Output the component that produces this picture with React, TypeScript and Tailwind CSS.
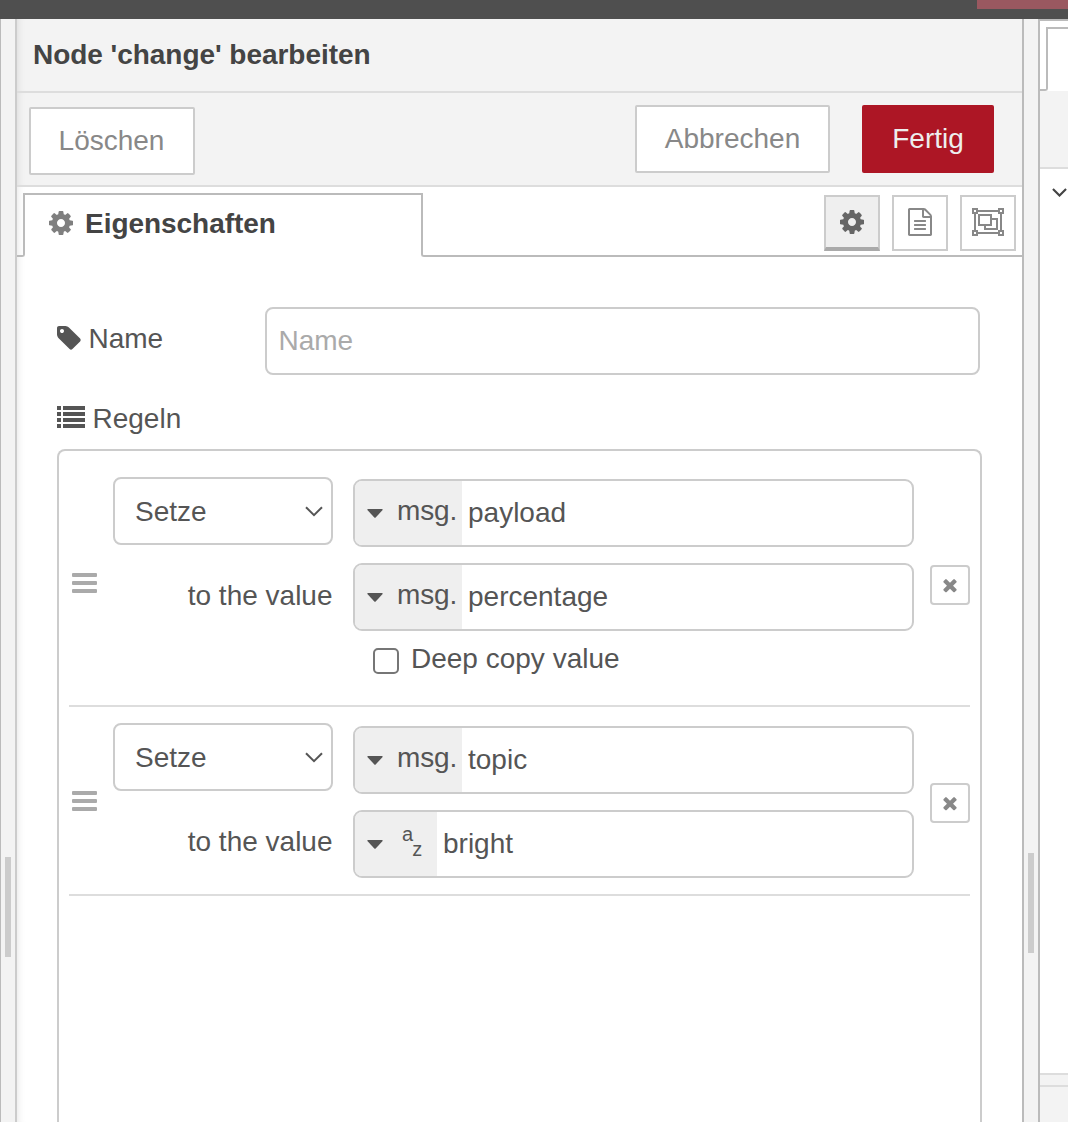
import type { ReactNode } from "react";

const COG =
  "M1152 896q0-106-75-181t-181-75-181 75-75 181 75 181 181 75 181-75 75-181zm512-109v222q0 12-8 23t-20 13l-185 28q-19 54-39 91 35 50 107 138 10 12 10 25t-9 23q-27 37-99 108t-94 71q-12 0-26-9l-138-108q-44 23-91 38-16 136-29 186-7 28-36 28h-222q-14 0-24.5-8.5t-11.5-21.5l-28-184q-49-16-90-37l-141 107q-10 9-25 9-14 0-25-11-126-114-165-168-7-10-7-23 0-12 8-23 15-21 51-66.5t54-70.5q-27-50-41-99l-183-27q-13-2-21-12.5t-8-23.5v-222q0-12 8-23t19-13l186-28q14-46 39-92-40-57-107-138-10-12-10-24 0-10 9-23 26-36 98.5-107.5t94.5-71.5q13 0 26 10l138 107q44-23 91-38 16-136 29-186 7-28 36-28h222q14 0 24.5 8.5t11.5 21.5l28 184q49 16 90 37l142-107q9-9 24-9 13 0 25 10 129 119 165 170 7 8 7 22 0 12-8 23-15 21-51 66.5t-54 70.5q26 50 41 98l183 28q13 2 21 12.5t8 23.5z";
const FILE_TEXT =
  "M1596 380q28 28 48 76t20 88v1152q0 40-28 68t-68 28h-1344q-40 0-68-28t-28-68v-1600q0-40 28-68t68-28h896q40 0 88 20t76 48zm-444-244v376h376q-10-29-22-41l-313-313q-12-12-41-22zm384 1528v-1024h-416q-40 0-68-28t-28-68v-416h-768v1536h1280zm-1024-864q0-14 9-23t23-9h704q14 0 23 9t9 23v64q0 14-9 23t-23 9h-704q-14 0-23-9t-9-23v-64zm736 224q14 0 23 9t9 23v64q0 14-9 23t-23 9h-704q-14 0-23-9t-9-23v-64q0-14 9-23t23-9h704zm0 256q14 0 23 9t9 23v64q0 14-9 23t-23 9h-704q-14 0-23-9t-9-23v-64q0-14 9-23t23-9h704z";
const TAG =
  "M576 448q0-53-37.5-90.5t-90.5-37.5-90.5 37.5-37.5 90.5 37.5 90.5 90.5 37.5 90.5-37.5 37.5-90.5zm1067 576q0 53-37 90l-491 492q-39 37-91 37-53 0-90-37l-715-716q-38-37-64.5-101t-26.5-117v-416q0-52 38-90t90-38h416q53 0 117 26.5t102 64.5l715 714q37 39 37 91z";
const TIMES =
  "M1490 1322q0 40-28 68l-136 136q-28 28-68 28t-68-28l-294-294-294 294q-28 28-68 28t-68-28l-136-136q-28-28-28-68t28-68l294-294-294-294q-28-28-28-68t28-68l136-136q28-28 68-28t68 28l294 294 294-294q28-28 68-28t68 28l136 136q28 28 28 68t-28 68l-294 294 294 294q28 28 28 68z";

function Icon({ d, className }: { d: string; className: string }) {
  return (
    <svg viewBox="0 0 1792 1792" fill="currentColor" className={`shrink-0 ${className}`}>
      <path d={d} />
    </svg>
  );
}

function ListIcon() {
  return (
    <svg viewBox="0 0 28 22" fill="currentColor" className="h-[22px] w-7 shrink-0">
      {[0, 6, 12, 18].map((y) => (
        <g key={y}>
          <rect x="0" y={y} width="4" height="4" />
          <rect x="6" y={y} width="22" height="4" />
        </g>
      ))}
    </svg>
  );
}

function ObjectGroupIcon() {
  return (
    <svg viewBox="0 0 32 28" fill="none" stroke="currentColor" strokeWidth="2" className="h-7 w-8">
      <path d="M6 3h20M6 25h20M3 6v16M29 6v16" />
      <path d="M1 1h4v4h-4zM27 1h4v4h-4zM1 23h4v4h-4zM27 23h4v4h-4z" />
      <path d="M7 7h12v10h-12zM19 11h6v10h-12v-4" />
    </svg>
  );
}

function Chevron({ className }: { className: string }) {
  return (
    <svg viewBox="0 0 18 11" fill="none" stroke="currentColor" className={className}>
      <path d="M1 1.2L9 9.2L17 1.2" />
    </svg>
  );
}

function DragHandle() {
  return (
    <div className="flex w-[25px] flex-col gap-1">
      <div className="h-1 rounded-[1px] bg-[#aaa]" />
      <div className="h-1 rounded-[1px] bg-[#aaa]" />
      <div className="h-1 rounded-[1px] bg-[#aaa]" />
    </div>
  );
}

function TypedInput({ type, value }: { type: "msg" | "str"; value: string }) {
  return (
    <div className="flex h-[68px] w-[561px] overflow-hidden rounded-[9px] border-2 border-[#ccc] bg-white">
      <div
        className={`flex shrink-0 items-center bg-[#efefef] pl-3 ${type === "msg" ? "w-[107px]" : "w-[82px]"}`}
      >
        <svg viewBox="0 0 16 9" fill="currentColor" className="h-[9px] w-4 shrink-0">
          <path d="M1 0h14q1 0 .6 .9L8.7 8.4q-.7 .6-1.4 0L.4 .9Q0 0 1 0z" />
        </svg>
        {type === "msg" ? (
          <span className="-mt-1 ml-3.5 tracking-[-0.1px]">msg.</span>
        ) : (
          <span className="ml-[19px] flex h-16 items-start text-[20px] leading-[20px]">
            <span className="mt-3">a</span>
            <span className="-ml-px mt-[27px]">z</span>
          </span>
        )}
      </div>
      <span className="pl-1.5 leading-[63px]">{value}</span>
    </div>
  );
}

function Rule({ className, children }: { className: string; children: ReactNode }) {
  return (
    <li className={`flex border-b-2 border-[#ddd] ${className}`}>
      <div className="flex w-[44px] items-center pb-4 pl-[3px]">
        <DragHandle />
      </div>
      <div className="w-[220px]">
        <div className="flex h-[68px] items-center justify-between rounded-[8px] border-2 border-[#ccc] bg-white pl-5 pr-2">
          <span className="pt-0.5">Setze</span>
          <Chevron className="h-[11px] w-[18px] stroke-2" />
        </div>
        <div className="mt-[35px] pr-[0.5px] text-right">to the value</div>
      </div>
      <div className="ml-5 w-[561px]">{children}</div>
      <div className="ml-4 flex items-center pb-3">
        <button className="flex size-10 items-center justify-center rounded-[4px] border-2 border-[#ccc] bg-white text-[#888]">
          <Icon d={TIMES} className="size-5" />
        </button>
      </div>
    </li>
  );
}

function Separator({ className, grip }: { className: string; grip: string }) {
  return (
    <div className={`flex shrink-0 bg-[#f3f3f3] pl-1 ${className}`}>
      <div className={`h-[100px] w-1.5 bg-[#ccc] ${grip}`} />
    </div>
  );
}

export default function App() {
  return (
    <div className="flex h-[1122px] w-[1068px] flex-col overflow-hidden bg-white font-['Liberation_Sans',Arial,sans-serif] text-[28px] leading-[32px] text-[#555]">
      <header className="flex h-[19px] shrink-0 justify-end bg-[#4f4f4f]">
        <div className="h-[9px] w-[91px] bg-[#9a5860]" />
      </header>

      <div className="flex min-h-0 flex-1">
        <Separator className="w-[15px] border-l border-[#bbb]" grip="mt-[838px]" />

        <main className="flex w-[1009px] shrink-0 flex-col border-l-2 border-r-2 border-l-[#ccc] border-r-[#bbb] shadow-[inset_8px_0_8px_-8px_rgba(0,0,0,0.12)]">
          <h1 className="h-[74px] border-b-2 border-[#ddd] bg-[#f3f3f3] pl-4 text-[28px] font-bold leading-[71px] tracking-[-0.04px] text-[#444] shadow-[inset_8px_0_8px_-8px_rgba(0,0,0,0.12)]">
            Node 'change' bearbeiten
          </h1>

          <div className="flex h-[94px] border-b-2 border-[#ddd] bg-[#f3f3f3] pl-3 pr-7 text-[#888] shadow-[inset_8px_0_8px_-8px_rgba(0,0,0,0.12)]">
            <button className="mt-3.5 h-[68px] w-[166px] rounded-[2px] border-2 border-[#ccc] bg-white pr-px">
              Löschen
            </button>
            <button className="ml-auto mt-3 h-[68px] w-[195px] rounded-[2px] border-2 border-[#ccc] bg-white">
              Abbrechen
            </button>
            <button className="ml-8 mt-3 h-[68px] w-[132px] rounded-[2px] bg-[#ad1625] text-[#eee]">
              Fertig
            </button>
          </div>

          <div className="flex h-[70px] shrink-0 pt-1.5">
            <div className="w-2 rounded-br-[3px] border-b-2 border-r-2 border-[#bbb]" />
            <div className="flex w-[396px] border-t-2 border-[#bbb] pl-[22px] pt-[13px] font-bold text-[#444]">
              <Icon d={COG} className="mt-px size-7 text-[#7f7f7f]" />
              <span className="ml-2.5 tracking-[-0.04px]">Eigenschaften</span>
            </div>
            <div className="flex flex-1 justify-end gap-3 rounded-bl-[3px] border-b-2 border-l-2 border-[#bbb] pr-1.5 pt-0.5 text-[#888]">
              <button className="flex size-14 justify-center border-2 border-b-4 border-[#ccc] border-b-[#aaa] bg-[#efefef] pt-[11px] text-[#666]">
                <Icon d={COG} className="size-7" />
              </button>
              <button className="flex size-14 justify-center border-2 border-[#ccc] bg-white pt-[11px]">
                <Icon d={FILE_TEXT} className="size-7" />
              </button>
              <button className="flex size-14 justify-center border-2 border-[#ccc] bg-white pt-[11px]">
                <ObjectGroupIcon />
              </button>
            </div>
          </div>

          <div className="flex min-h-0 flex-1 flex-col pl-10 pt-[50px]">
            <div className="flex">
              <label className="flex w-[208px] pt-4">
                <Icon d={TAG} className="-ml-0.5 mt-px size-7" />
                <span className="ml-[5.5px]">Name</span>
              </label>
              <input
                className="h-[68px] w-[715px] rounded-[8px] border-2 border-[#ccc] bg-white pl-[11.5px] pr-3 placeholder:text-[#aaa]"
                placeholder="Name"
              />
            </div>

            <div className="mt-7 flex gap-[7.5px]">
              <div className="mt-[3px]">
                <ListIcon />
              </div>
              <span>Regeln</span>
            </div>

            <ul className="mt-3.5 min-h-0 w-[925px] flex-1 rounded-t-[8px] border-x-2 border-t-2 border-[#ccc] px-2.5">
              <Rule className="h-[256px] pt-[26px]">
                <div className="mt-0.5 flex flex-col gap-4">
                  <TypedInput type="msg" value="payload" />
                  <TypedInput type="msg" value="percentage" />
                </div>
                <label className="mt-3 flex pl-5">
                  <span className="mt-[5px] size-[26px] rounded-[5px] border-2 border-[#767676] bg-white" />
                  <span className="ml-3">Deep copy value</span>
                </label>
              </Rule>
              <Rule className="h-[189px] pt-4">
                <div className="mt-[3px] flex flex-col gap-4">
                  <TypedInput type="msg" value="topic" />
                  <TypedInput type="str" value="bright" />
                </div>
              </Rule>
            </ul>
          </div>
        </main>

        <Separator className="w-[14px]" grip="mt-[834px]" />

        <aside className="flex flex-1 flex-col border-l-2 border-t-2 border-[#bbb]">
          <div className="flex h-[70px] shrink-0 pt-1.5">
            <div className="w-2 rounded-br-[3px] border-b-2 border-r-2 border-[#bbb]" />
            <div className="flex-1 border-t-2 border-[#bbb]" />
          </div>
          <div className="h-[78px] shrink-0 border-b-2 border-[#ddd] bg-[#f3f3f3]" />
          <div className="flex-1 pl-3 pt-[19px] text-[#444]">
            <Chevron className="h-[9px] w-[15px] stroke-[2.6px]" />
          </div>
          <div className="h-3.5 shrink-0 border-y-2 border-[#ddd] bg-[#f3f3f3]" />
          <div className="h-[35px] shrink-0 bg-[#f3f3f3]" />
        </aside>
      </div>
    </div>
  );
}
